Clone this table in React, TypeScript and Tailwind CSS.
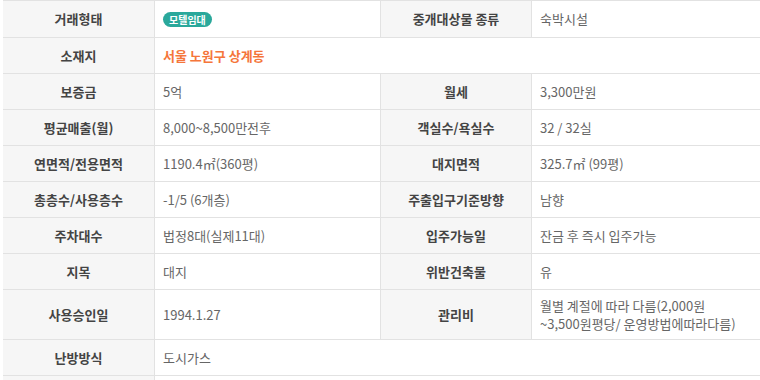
import React from "react";

type Cell = { label: string; value: React.ReactNode };

const font = { fontFamily: '"Noto Sans CJK KR", "Noto Sans", sans-serif' };

function Label({ children }: { children: React.ReactNode }) {
  return (
    <div className="flex items-center justify-center border-r border-[#e2e2e2] bg-[#f6f6f6] text-[13px] font-bold text-[#444]">
      {children}
    </div>
  );
}

function Value({ children, className = "" }: { children: React.ReactNode; className?: string }) {
  return (
    <div className={`flex items-center px-2 text-[13px] leading-[18px] text-[#666] ${className}`}>
      {children}
    </div>
  );
}

function Row({ h, left, right }: { h: string; left: Cell; right?: Cell | null }) {
  return (
    <div className={`grid grid-cols-[152px_226px_151px_1fr] border-b border-[#e2e2e2] ${h}`}>
      <Label>{left.label}</Label>
      {right ? (
        <>
          <Value className="border-r border-[#e2e2e2]">{left.value}</Value>
          <Label>{right.label}</Label>
          <Value>{right.value}</Value>
        </>
      ) : (
        <Value className="col-span-3">{left.value}</Value>
      )}
    </div>
  );
}

export default function App() {
  return (
    <div className="h-[380px] w-[760px] overflow-hidden bg-white" style={font}>
      <div className="pl-[3px]">
        {/* cut-off row above */}
        <div className="grid h-px grid-cols-[152px_226px_151px_1fr] border-b border-[#e2e2e2]">
          <div className="border-r border-[#e2e2e2] bg-[#f6f6f6]" />
          <div className="border-r border-[#e2e2e2]" />
          <div className="border-r border-[#e2e2e2] bg-[#f6f6f6]" />
          <div />
        </div>

        <Row
          h="h-[37px]"
          left={{
            label: "거래형태",
            value: (
              <span className="rounded-full bg-[#2aa89b] px-[6px] py-px text-[10px] leading-[13px] font-bold text-white">
                모텔임대
              </span>
            ),
          }}
          right={{ label: "중개대상물 종류", value: "숙박시설" }}
        />
        <Row
          h="h-[36px]"
          left={{
            label: "소재지",
            value: <span className="font-bold text-[#f5763b]">서울 노원구 상계동</span>,
          }}
        />
        <Row
          h="h-[36px]"
          left={{ label: "보증금", value: "5억" }}
          right={{ label: "월세", value: "3,300만원" }}
        />
        <Row
          h="h-[36px]"
          left={{ label: "평균매출(월)", value: "8,000~8,500만전후" }}
          right={{ label: "객실수/욕실수", value: "32 / 32실" }}
        />
        <Row
          h="h-[36px]"
          left={{ label: "연면적/전용면적", value: "1190.4㎡(360평)" }}
          right={{ label: "대지면적", value: "325.7㎡ (99평)" }}
        />
        <Row
          h="h-[36px]"
          left={{ label: "총층수/사용층수", value: "-1/5 (6개층)" }}
          right={{ label: "주출입구기준방향", value: "남향" }}
        />
        <Row
          h="h-[36px]"
          left={{ label: "주차대수", value: "법정8대(실제11대)" }}
          right={{ label: "입주가능일", value: "잔금 후 즉시 입주가능" }}
        />
        <Row
          h="h-[36px]"
          left={{ label: "지목", value: "대지" }}
          right={{ label: "위반건축물", value: "유" }}
        />
        <Row
          h="h-[50px]"
          left={{ label: "사용승인일", value: "1994.1.27" }}
          right={{
            label: "관리비",
            value: (
              <span>
                월별 계절에 따라 다름(2,000원
                <br />
                ~3,500원평당/ 운영방법에따라다름)
              </span>
            ),
          }}
        />
        <Row h="h-[36px]" left={{ label: "난방방식", value: "도시가스" }} />

        {/* next row, cut off */}
        <div className="grid h-[20px] grid-cols-[152px_226px_151px_1fr]">
          <div className="border-r border-[#e2e2e2] bg-[#f6f6f6]" />
          <div />
        </div>
      </div>
    </div>
  );
}
